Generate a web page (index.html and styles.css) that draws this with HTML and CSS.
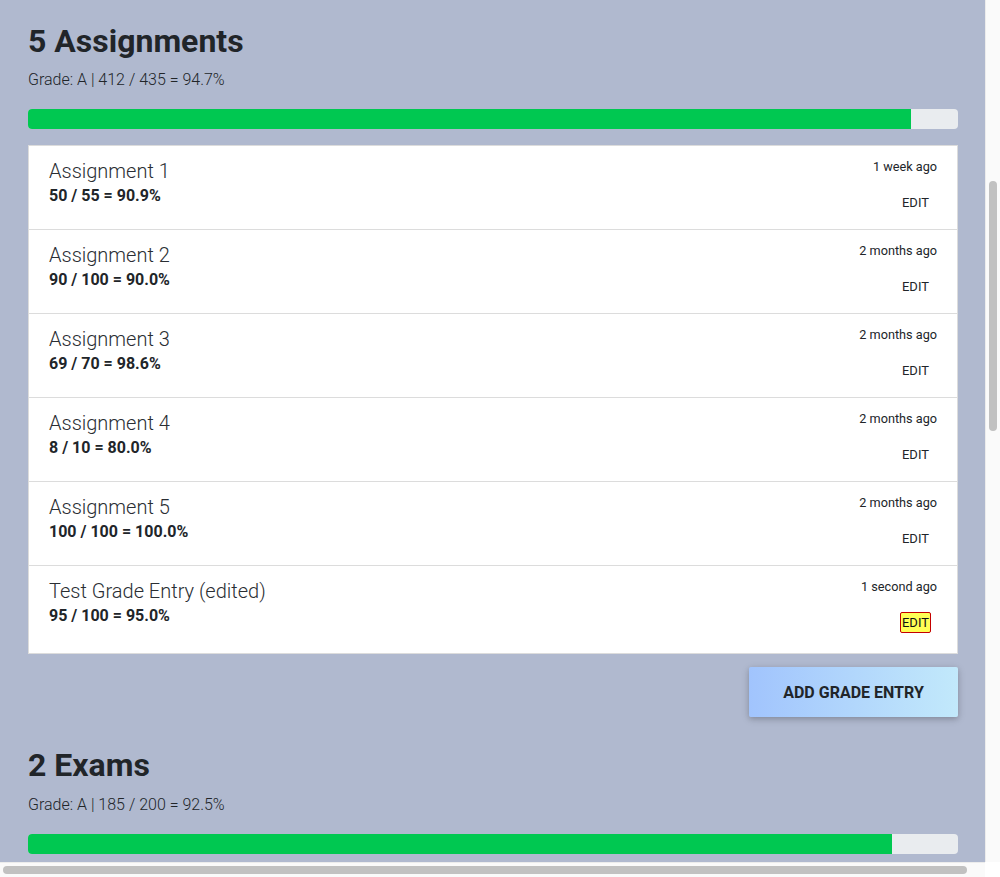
FILE: index.html
```html
<!DOCTYPE html>
<html lang="en">
<head>
<meta charset="utf-8">
<title>Grades</title>
<link rel="stylesheet" href="styles.css">
</head>
<body>
<div class="frame">
  <main class="viewport">
    <section class="category">
      <h2 class="cat-title">5 Assignments</h2>
      <p class="cat-grade">Grade: A | 412 / 435 = 94.7%</p>
      <div class="progress"><div class="progress-fill" style="width:94.9%"></div></div>
      <ul class="entries">
        <li class="entry">
          <div class="entry-main"><div class="entry-name">Assignment 1</div><div class="entry-score">50 / 55 = 90.9%</div></div>
          <div class="entry-side"><div class="entry-time">1 week ago</div><button class="edit-btn">EDIT</button></div>
        </li>
        <li class="entry">
          <div class="entry-main"><div class="entry-name">Assignment 2</div><div class="entry-score">90 / 100 = 90.0%</div></div>
          <div class="entry-side"><div class="entry-time">2 months ago</div><button class="edit-btn">EDIT</button></div>
        </li>
        <li class="entry">
          <div class="entry-main"><div class="entry-name">Assignment 3</div><div class="entry-score">69 / 70 = 98.6%</div></div>
          <div class="entry-side"><div class="entry-time">2 months ago</div><button class="edit-btn">EDIT</button></div>
        </li>
        <li class="entry">
          <div class="entry-main"><div class="entry-name">Assignment 4</div><div class="entry-score">8 / 10 = 80.0%</div></div>
          <div class="entry-side"><div class="entry-time">2 months ago</div><button class="edit-btn">EDIT</button></div>
        </li>
        <li class="entry">
          <div class="entry-main"><div class="entry-name">Assignment 5</div><div class="entry-score">100 / 100 = 100.0%</div></div>
          <div class="entry-side"><div class="entry-time">2 months ago</div><button class="edit-btn">EDIT</button></div>
        </li>
        <li class="entry entry-last">
          <div class="entry-main"><div class="entry-name">Test Grade Entry (edited)</div><div class="entry-score">95 / 100 = 95.0%</div></div>
          <div class="entry-side"><div class="entry-time">1 second ago</div><button class="edit-btn edit-btn-active">EDIT</button></div>
        </li>
      </ul>
      <div class="actions"><button class="add-btn">ADD GRADE ENTRY</button></div>
    </section>
    <section class="category">
      <h2 class="cat-title">2 Exams</h2>
      <p class="cat-grade">Grade: A | 185 / 200 = 92.5%</p>
      <div class="progress"><div class="progress-fill" style="width:92.9%"></div></div>
    </section>
  </main>
  <div class="vscroll"><div class="vthumb"></div></div>
  <div class="hscroll"><div class="hthumb"></div></div>
  <div class="corner"></div>
</div>
</body>
</html>
```

FILE: styles.css
```css
* { box-sizing: border-box; }
html, body { margin: 0; padding: 0; }
body {
  font-family: Roboto, "Liberation Sans", Arial, sans-serif;
  color: #212529;
  background: #ffffff;
}
.frame {
  display: grid;
  grid-template-columns: 985px 15px;
  grid-template-rows: 862px 15px;
  width: 1000px;
  height: 877px;
  overflow: hidden;
}
.viewport {
  background: #b0b9cf;
  overflow: hidden;
  padding: 22px 27px 0 28px;
}
.category { margin: 0; }
.cat-title {
  margin: 0 0 8px;
  font-size: 32px;
  line-height: 38.4px;
  font-weight: 700;
  color: #212529;
}
.cat-grade {
  margin: 0 0 17px;
  font-size: 16px;
  line-height: 24px;
  font-weight: 300;
}
.progress {
  height: 20px;
  background: #e9ecef;
  border-radius: 4px;
  overflow: hidden;
  display: flex;
}
.progress-fill {
  background: #00c851;
  height: 100%;
}
.entries {
  list-style: none;
  margin: 16px 0 0;
  padding: 0;
  background: #ffffff;
  border: 1px solid #dcdcdc;
}
.entry {
  display: flex;
  justify-content: space-between;
  align-items: flex-start;
  padding: 11px 20px 16px;
  height: 84px;
  border-top: 1px solid #dcdcdc;
}
.entry:first-child { border-top: 0; height: 83px; }
.entry.entry-last { height: 88px; padding-bottom: 20px; }
.entry-name {
  font-size: 20px;
  line-height: 28px;
  font-weight: 300;
  color: #2a2e33;
}
.entry-score {
  font-size: 16px;
  line-height: 21px;
  font-weight: 700;
}
.entry-side {
  display: flex;
  flex-direction: column;
  align-items: flex-end;
}
.entry-time {
  font-size: 12.7px;
  line-height: 20px;
  margin-bottom: 15px;
}
.edit-btn {
  font-family: Roboto, "Liberation Sans", Arial, sans-serif;
  font-size: 13px;
  line-height: 17px;
  height: 21px;
  padding: 1px 1px;
  margin: 0 6px 0 0;
  border: 1px solid transparent;
  border-radius: 2px;
  background: transparent;
  color: #212529;
}
.edit-btn-active {
  background: #ffff55;
  border-color: #c40000;
  color: #111111;
}
.actions {
  display: flex;
  justify-content: flex-end;
  margin: 13px 0 29px;
}
.add-btn {
  width: 209px;
  height: 50px;
  border: 0;
  border-radius: 2px;
  background: linear-gradient(90deg, #a1c4fd, #c2e9fb);
  box-shadow: 0 2px 5px 0 rgba(0,0,0,.16), 0 2px 10px 0 rgba(0,0,0,.12);
  font-family: Roboto, "Liberation Sans", Arial, sans-serif;
  font-size: 16px;
  font-weight: 700;
  color: #212529;
  padding: 0;
}
.vscroll {
  background: #fafafa;
  border-left: 1px solid #ececec;
  padding: 181px 3px 0 3px;
}
.vthumb {
  width: 8px;
  height: 250px;
  background: #c1c1c1;
  border-radius: 4px;
}
.hscroll {
  background: #fafafa;
  border-top: 1px solid #ececec;
  padding: 3px 0 0 3px;
}
.hthumb {
  width: 964px;
  height: 8px;
  background: #c1c1c1;
  border-radius: 4px;
}
.corner { background: #ffffff; }
```
